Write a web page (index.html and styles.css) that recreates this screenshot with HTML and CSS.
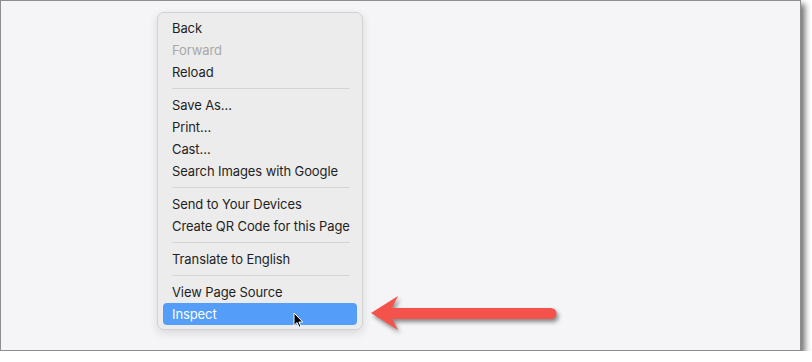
FILE: index.html
```html
<!DOCTYPE html>
<html lang="en">
<head>
    <meta charset="UTF-8">
    <meta name="viewport" content="width=device-width, initial-scale=1.0">
    <title>Context menu</title>
    <link rel="stylesheet" href="styles.css">
</head>
<body>
    <div class="frame">
        <div class="menu">
            <div class="item">Back</div>
            <div class="item disabled">Forward</div>
            <div class="item">Reload</div>
            <div class="sep"></div>
            <div class="item">Save As…</div>
            <div class="item">Print…</div>
            <div class="item">Cast…</div>
            <div class="item">Search Images with Google</div>
            <div class="sep"></div>
            <div class="item">Send to Your Devices</div>
            <div class="item">Create QR Code for this Page</div>
            <div class="sep"></div>
            <div class="item">Translate to English</div>
            <div class="sep"></div>
            <div class="item">View Page Source</div>
            <div class="item active">Inspect</div>
        </div>

        <!-- mouse pointer -->
        <svg class="cursor" width="12" height="17" viewBox="0 0 12 17">
            <path d="M1 1 V13.5 L4 10.6 L6.1 15.2 L7.9 14.4 L5.9 10 H9.8 Z" fill="#000" stroke="#fff" stroke-width="1" stroke-linejoin="round"/>
        </svg>

        <!-- annotation arrow -->
        <svg class="arrow" width="200" height="50" viewBox="0 0 200 50">
            <path d="M6 23 L33 6 L27 18 L186 18 A5.5 5.5 0 0 1 186 29 L27 29 L33 40 Z" fill="#f4534b"/>
        </svg>
    </div>
</body>
</html>
```

FILE: styles.css
```css
body {
    margin: 0;
    background: #fff;
    font-family: Inter, "Liberation Sans", sans-serif;
}

.frame {
    position: relative;
    box-sizing: border-box;
    width: 801px;
    height: 351px;
    background: #f5f5f7;
    border: 1px solid #8e8e8e;
    box-shadow: 4px 4px 6px rgba(0, 0, 0, 0.55);
}

.menu {
    position: absolute;
    left: 156px;
    top: 11px;
    width: 194px;
    padding: 4px 5px;
    background: #ececec;
    border: 1px solid #d2d2d2;
    border-radius: 7px;
    box-shadow: 0 3px 10px rgba(0, 0, 0, 0.12);
}

.item {
    height: 22px;
    line-height: 22px;
    padding-left: 9px;
    font-size: 13px;
    color: #1f1f1f;
    border-radius: 4px;
    white-space: nowrap;
    letter-spacing: -0.1px;
}

.item.disabled {
    color: #a8a8a8;
}

.item.active {
    background: #549ef9;
    color: #fff;
}

.sep {
    height: 1px;
    margin: 5px 7px 5px 9px;
    background: #d4d4d4;
}

.cursor {
    position: absolute;
    left: 292px;
    top: 311px;
}

.arrow {
    position: absolute;
    left: 364px;
    top: 289px;
    filter: drop-shadow(2px 3px 2px rgba(0, 0, 0, 0.45));
}
```
